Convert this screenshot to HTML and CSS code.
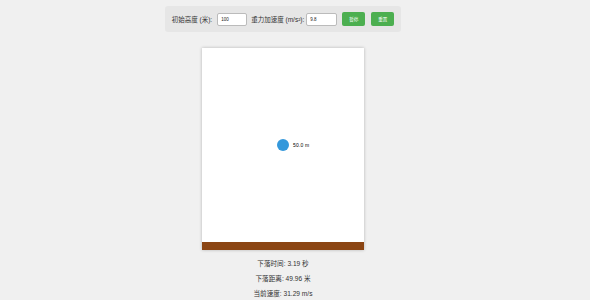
FILE: index.html
```html
<!DOCTYPE html>
<html lang="zh-CN">
<head>
<meta charset="utf-8">
<title>自由落体模拟</title>
<link rel="stylesheet" href="styles.css">
</head>
<body>
<div class="page">
  <div class="controls">
    <label class="lbl lbl-height" for="h">初始高度 (米):</label>
    <input class="field field-h" id="h" type="text" value="100">
    <label class="lbl lbl-g" for="g">重力加速度 (m/s²):</label>
    <input class="field field-g" id="g" type="text" value="9.8">
    <button class="btn btn-pause">暂停</button>
    <button class="btn btn-reset">重置</button>
  </div>
  <div class="scene">
    <div class="ball"></div>
    <div class="ball-label">50.0 m</div>
    <div class="ground"></div>
  </div>
  <div class="stats">
    <div class="stat">下落时间: 3.19 秒</div>
    <div class="stat">下落距离: 49.96 米</div>
    <div class="stat">当前速度: 31.29 m/s</div>
  </div>
</div>
</body>
</html>
```
FILE: styles.css
```css
html, body {
  margin: 0;
  padding: 0;
  background: #f0f0f0;
}
body {
  font-family: "Liberation Sans", "Noto Sans CJK SC", sans-serif;
  color: #333;
}
.page {
  width: 566px;
  display: flex;
  flex-direction: column;
  align-items: center;
}
.controls {
  margin-top: 6px;
  height: 26px;
  box-sizing: border-box;
  padding: 0 7px;
  background: #e6e6e6;
  border-radius: 3px;
  display: flex;
  align-items: center;
}
.lbl {
  font-size: 6.5px;
  color: #333;
  white-space: nowrap;
}
.field {
  box-sizing: border-box;
  height: 13px;
  border: 1px solid #bbb;
  border-radius: 2px;
  background: #fff;
  padding: 0 3px;
  font-family: "Liberation Sans", sans-serif;
  font-size: 4.5px;
  color: #222;
  outline: none;
}
.field-h {
  width: 30px;
  margin: 0 4px 0 5px;
}
.field-g {
  width: 31px;
  margin: 0 0 0 2px;
}
.btn {
  box-sizing: border-box;
  height: 14px;
  width: 23px;
  border: none;
  border-radius: 2px;
  background: #4caf50;
  color: #fff;
  font-family: "Liberation Sans", "Noto Sans CJK SC", sans-serif;
  font-size: 4.5px;
  padding: 0;
}
.btn-pause {
  margin-left: 5px;
}
.btn-reset {
  margin-left: 6px;
}
.scene {
  position: relative;
  margin-top: 16px;
  width: 162px;
  height: 202px;
  background: #fff;
  box-shadow: 0 0 3px rgba(0, 0, 0, 0.25);
  display: flex;
  flex-direction: column;
  justify-content: flex-end;
}
.ground {
  height: 8px;
  background: #8b4513;
}
.ball {
  position: absolute;
  left: 75px;
  top: 91px;
  width: 12px;
  height: 12px;
  border-radius: 50%;
  background: #3498db;
}
.ball-label {
  position: absolute;
  left: 91px;
  top: 94px;
  font-size: 5px;
  line-height: 7px;
  letter-spacing: 0.2px;
  color: #000;
}
.stats {
  margin-top: 6px;
  display: flex;
  flex-direction: column;
  align-items: center;
}
.stat {
  font-size: 6.6px;
  line-height: 15px;
  color: #333;
}
```
